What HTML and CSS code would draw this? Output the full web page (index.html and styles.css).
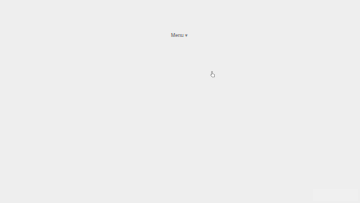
FILE: index.html
```html
<!DOCTYPE html>
<html lang="en">
<head>
  <meta charset="UTF-8" />
  <meta name="viewport" content="width=device-width, initial-scale=1.0"/>
  <title>Menu</title>
  <link rel="stylesheet" href="styles.css">
</head>
<body>
  <div class="page">
    <nav class="top-nav">
      <span class="menu-toggle">Menu <span class="caret">&#9662;</span></span>
    </nav>

    <div class="footer-box"></div>
  </div>

  <svg class="cursor" width="5" height="7" viewBox="0 0 10 14">
    <path d="M3 1 L3 8 L1.5 7 L1 8 L4 12 L9 12 L9 7 L7 6 L5 6 L5 1 Z" fill="#fff" stroke="#777" stroke-width="1"/>
  </svg>
</body>
</html>
```

FILE: styles.css
```css
* {
  box-sizing: border-box;
}

body {
  margin: 0;
  font-family: 'Liberation Sans', Arial, sans-serif;
  background-color: #eeeeee;
  color: #555;
  height: 100vh;
  overflow: hidden;
}

.page {
  height: 100%;
  display: flex;
  flex-direction: column;
}

.top-nav {
  padding: 31px 0 0 171px;
  font-size: 5px;
  line-height: 8px;
}

.menu-toggle {
  color: #555;
}

.caret {
  font-size: 5px;
  color: #777;
}

.footer-box {
  margin-top: auto;
  align-self: flex-end;
  width: 45px;
  height: 12px;
  margin-right: 2px;
  margin-bottom: 2px;
  background-color: #f0f0f0;
}

.cursor {
  position: absolute;
  left: 210px;
  top: 71px;
}
```
